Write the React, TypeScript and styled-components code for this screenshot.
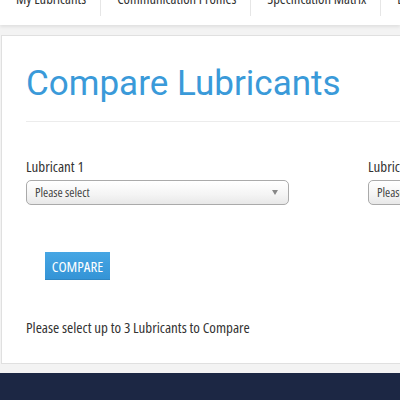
import React from "react";
import styled, { createGlobalStyle } from "styled-components";

const Global = createGlobalStyle`
  html, body { margin: 0; padding: 0; background: #f3f3f3; overflow: hidden; }
  body { font-family: "Open Sans", "Liberation Sans", sans-serif; font-stretch: 75%; color: #333; }
`;

const Page = styled.div`
  width: 400px;
  height: 400px;
  display: flex;
  flex-direction: column;
  overflow: hidden;
`;

const Nav = styled.nav`
  margin-top: -23px;
  height: 48px;
  background: #fff;
  box-shadow: 0 2px 3px rgba(0,0,0,0.08);
  display: flex;
  align-items: flex-start;
  white-space: nowrap;
  flex-shrink: 0;
`;

const Tab = styled.div`
  display: flex;
  align-items: center;
  height: 33px;
  padding: 6px 14px 0 16px;
  font-size: 14.5px;
  line-height: 1;
  color: #333;
  border-right: 1px solid #e6e6e6;
`;

const Panel = styled.main`
  margin: 10px 0 0 1px;
  background: #fff;
  border: 1px solid #e0e0e0;
  border-right: none;
  height: 329px;
  box-sizing: border-box;
  padding: 0 0 0 24px;
  flex-shrink: 0;
`;

const Title = styled.h1`
  margin: 0;
  padding-top: 26px;
  font-family: Roboto, "Liberation Sans", sans-serif;
  font-stretch: normal;
  font-weight: 400;
  font-size: 35px;
  line-height: 44px;
  color: #3a9ad9;
`;

const Rule = styled.hr`
  border: 0;
  border-top: 1px solid #ececec;
  margin: 15px 0 0 0;
`;

const Selects = styled.div`
  display: flex;
  gap: 79px;
  margin-top: 34px;
  white-space: nowrap;
`;

const Field = styled.div`
  display: flex;
  flex-direction: column;
  width: 263px;
  flex-shrink: 0;
`;

const Label = styled.label`
  font-size: 15px;
  line-height: 20px;
  color: #333;
`;

const Select = styled.div`
  margin-top: 4px;
  height: 25px;
  box-sizing: border-box;
  border: 1px solid #aaa;
  border-radius: 5px;
  background: linear-gradient(#ffffff 0%, #f4f4f4 60%, #e8e8e8 100%);
  display: flex;
  align-items: center;
  justify-content: space-between;
  padding: 0 10px 0 8px;
  font-size: 12.5px;
  color: #444;
  overflow: hidden;
`;

const Arrow = styled.span`
  width: 0;
  height: 0;
  border-left: 3.5px solid transparent;
  border-right: 3.5px solid transparent;
  border-top: 5px solid #888;
`;

const Button = styled.button`
  margin: 47px 0 0 19px;
  width: 65px;
  height: 28px;
  background: linear-gradient(#46a6e4, #3494d6);
  border: none;
  border-bottom: 1px solid #2f86c2;
  color: #fff;
  font-family: "Open Sans", "Liberation Sans", sans-serif;
  font-stretch: 75%;
  font-size: 15px;
  padding: 0;
  display: block;
`;

const Note = styled.p`
  margin: 37px 0 0 0;
  font-size: 15px;
  color: #333;
`;

const Footer = styled.footer`
  margin-top: 9px;
  flex: 1;
  background: #1c2744;
`;

export default function App() {
  return (
    <Page>
      <Global />
      <Nav>
        <Tab>My Lubricants</Tab>
        <Tab>Communication Profiles</Tab>
        <Tab>Specification Matrix</Tab>
        <Tab>Lubricant Lookup</Tab>
      </Nav>
      <Panel>
        <Title>Compare Lubricants</Title>
        <Rule />
        <Selects>
          <Field>
            <Label>Lubricant 1</Label>
            <Select>Please select<Arrow /></Select>
          </Field>
          <Field>
            <Label>Lubricant 2</Label>
            <Select>Please select<Arrow /></Select>
          </Field>
        </Selects>
        <Button>COMPARE</Button>
        <Note>Please select up to 3 Lubricants to Compare</Note>
      </Panel>
      <Footer />
    </Page>
  );
}
